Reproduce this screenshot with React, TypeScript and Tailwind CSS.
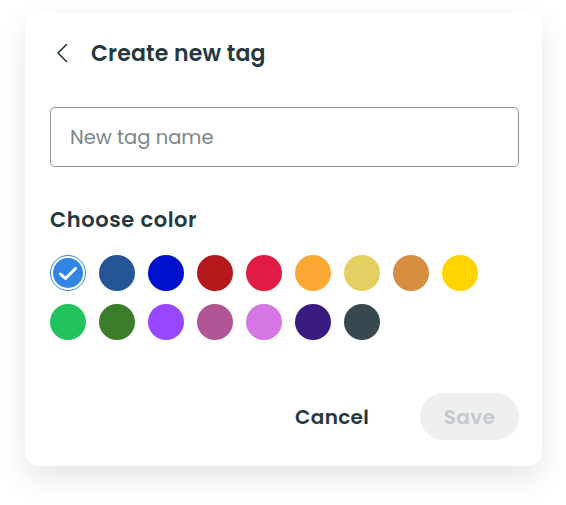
import React, { useState } from 'react';

const colors = [
    '#3385e5', '#235597', '#0010cc', '#b5191c', '#e01c45', '#fba834', '#e6cf62', '#d68f41', '#ffd400',
    '#22c35e', '#3b7d2a', '#9747ff', '#b05695', '#d675e4', '#3a1b82', '#37494f',
];

const App: React.FC = () => {
    const [selected, setSelected] = useState(0);
    const [name, setName] = useState('');

    return (
        <div className="min-h-screen bg-white pt-[13px] pl-[25px] font-['Poppins','Inter',sans-serif] text-[#27383e]">
            <div className="w-[517px] rounded-[14px] bg-white pl-[25px] pr-[23px] pt-[20px] pb-[26px] shadow-[0_12px_30px_rgba(0,0,0,0.10)]">
                {/* Header */}
                <div className="flex h-[40px] items-center">
                    <button className="flex h-[40px] w-[30px] items-center pl-[4px] text-[#27383e]">
                        <svg width="16" height="22" viewBox="0 0 16 22" fill="none">
                            <path d="M12.5 2.5 L4 11 L12.5 19.5" stroke="currentColor" strokeWidth="1.6" strokeLinecap="round" strokeLinejoin="round" />
                        </svg>
                    </button>
                    <h1 className="ml-[11px] text-[22px] font-semibold tracking-[0.2px]">Create new tag</h1>
                </div>

                {/* Name input */}
                <input
                    value={name}
                    onChange={(e) => setName(e.target.value)}
                    placeholder="New tag name"
                    className="mt-[34px] h-[60px] w-full rounded-[5px] border-[1.5px] border-[#8a9599] px-[19px] text-[19.5px] text-[#27383e] outline-none placeholder:text-[#7b868a]"
                />

                {/* Colors */}
                <h2 className="mt-[38px] text-[21px] leading-[30px] font-semibold tracking-[0.6px]">Choose color</h2>
                <div className="mt-[20px] grid grid-cols-[repeat(9,36px)] gap-[13px]">
                    {colors.map((c, i) => (
                        <button
                            key={c}
                            onClick={() => setSelected(i)}
                            className="flex h-[36px] w-[36px] items-center justify-center rounded-full"
                            style={
                                selected === i
                                    ? { border: `1.5px solid ${c}`, padding: 2 }
                                    : { backgroundColor: c }
                            }
                        >
                            {selected === i && (
                                <span className="flex h-full w-full items-center justify-center rounded-full" style={{ backgroundColor: c }}>
                                    <svg width="20" height="15" viewBox="0 0 20 15" fill="none">
                                        <path d="M2.5 8 L7.5 12.5 L17.5 2.5" stroke="white" strokeWidth="3" strokeLinecap="round" strokeLinejoin="round" />
                                    </svg>
                                </span>
                            )}
                        </button>
                    ))}
                </div>

                {/* Actions */}
                <div className="mt-[53px] flex items-center justify-end">
                    <button className="h-[47px] px-[24px] text-[20px] font-semibold tracking-[0.3px] text-[#27383e]">Cancel</button>
                    <button disabled className="ml-[27px] h-[47px] w-[99px] rounded-full bg-[#eef0f0] text-[20px] font-semibold tracking-[0.3px] text-[#c4c9cb]">Save</button>
                </div>
            </div>
        </div>
    );
};

export default App;
